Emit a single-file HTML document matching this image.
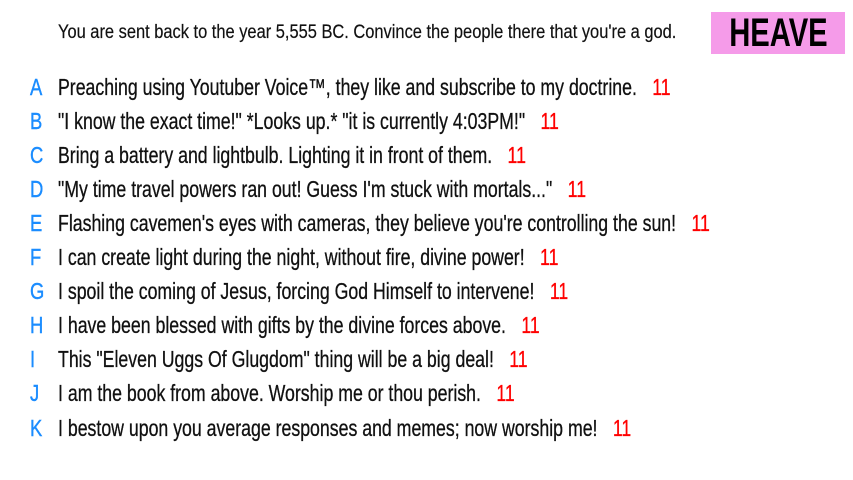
<!DOCTYPE html>
<html><head><meta charset="utf-8"><style>
body{margin:0;width:853px;height:480px;background:#fff;overflow:hidden;position:relative;font-family:"Liberation Sans Narrow","Liberation Sans",sans-serif;color:#111}
.q{position:absolute;left:58px;top:22px;font-size:19px;white-space:nowrap;transform:scaleX(0.865);transform-origin:left;-webkit-text-stroke:0.2px #111}
.box{position:absolute;left:711px;top:12px;width:134px;height:42px;background:#f59be9;text-align:center;font-size:40px;line-height:42px;color:#000;font-weight:bold}
.box span{display:inline-block;transform:scaleX(0.73)}
.r{position:absolute;left:0;height:30px;font-size:23px;white-space:nowrap;line-height:30px}
.l{position:absolute;left:30px;color:#1a8cff;transform:scaleX(0.8);transform-origin:left;-webkit-text-stroke:0.4px #1a8cff}
.t{position:absolute;left:58px;transform:scaleX(0.77);transform-origin:left;-webkit-text-stroke:0.3px #111}
.n{color:#f00;margin-left:20px;-webkit-text-stroke:0.3px #f00}
</style></head><body>
<div class="q">You are sent back to the year 5,555 BC. Convince the people there that you're a god.</div>
<div class="box"><span>HEAVE</span></div>
<div class="r" style="top:72px"><span class="l">A</span><span class="t">Preaching using Youtuber Voice™, they like and subscribe to my doctrine.<span class="n">11</span></span></div>
<div class="r" style="top:106px"><span class="l">B</span><span class="t">"I know the exact time!" *Looks up.* "it is currently 4:03PM!"<span class="n">11</span></span></div>
<div class="r" style="top:140px"><span class="l">C</span><span class="t">Bring a battery and lightbulb. Lighting it in front of them.<span class="n">11</span></span></div>
<div class="r" style="top:174px"><span class="l">D</span><span class="t">"My time travel powers ran out! Guess I'm stuck with mortals..."<span class="n">11</span></span></div>
<div class="r" style="top:208px"><span class="l">E</span><span class="t">Flashing cavemen's eyes with cameras, they believe you're controlling the sun!<span class="n">11</span></span></div>
<div class="r" style="top:242px"><span class="l">F</span><span class="t">I can create light during the night, without fire, divine power!<span class="n">11</span></span></div>
<div class="r" style="top:276px"><span class="l">G</span><span class="t">I spoil the coming of Jesus, forcing God Himself to intervene!<span class="n">11</span></span></div>
<div class="r" style="top:310px"><span class="l">H</span><span class="t">I have been blessed with gifts by the divine forces above.<span class="n">11</span></span></div>
<div class="r" style="top:344px"><span class="l">I</span><span class="t">This "Eleven Uggs Of Glugdom" thing will be a big deal!<span class="n">11</span></span></div>
<div class="r" style="top:378px"><span class="l">J</span><span class="t">I am the book from above. Worship me or thou perish.<span class="n">11</span></span></div>
<div class="r" style="top:413px"><span class="l">K</span><span class="t">I bestow upon you average responses and memes; now worship me!<span class="n">11</span></span></div>
</body></html>
